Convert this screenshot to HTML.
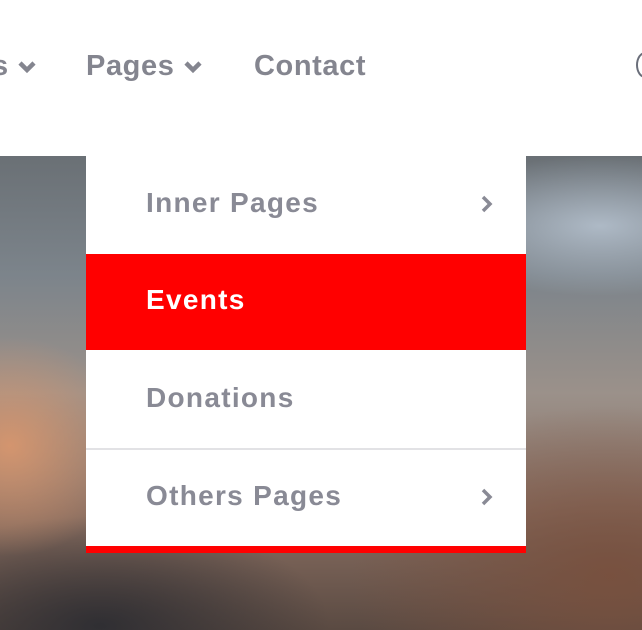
<!DOCTYPE html>
<html><head><style>
html,body{margin:0;padding:0;width:642px;height:630px;overflow:hidden;background:#fff;font-family:"Liberation Sans",sans-serif;}
.bg{position:absolute;left:0;top:156px;width:642px;height:474px;
background:
radial-gradient(ellipse 120px 110px at 10px 290px,rgba(215,150,110,.95),rgba(215,150,110,0) 100%),
radial-gradient(ellipse 230px 110px at 100px 470px,rgba(45,45,50,.95),rgba(45,45,50,0) 100%),
radial-gradient(ellipse 260px 170px at 610px 420px,rgba(120,80,62,.95),rgba(120,80,62,0) 100%),
radial-gradient(ellipse 180px 70px at 600px 70px,rgba(180,192,205,.9),rgba(180,192,205,0) 100%),
linear-gradient(180deg,#6a7075 0%,#7c848b 25%,#9b918a 50%,#8a6f62 75%,#5a4a42 100%);}
.nav{position:absolute;top:50px;font-size:29px;font-weight:bold;color:#84858f;letter-spacing:0.6px;}
.chev{display:inline-block;vertical-align:middle;}
.dd{position:absolute;left:86px;top:156px;width:440px;height:397px;background:#fff;}
.row{position:absolute;left:0;width:440px;font-size:28px;font-weight:bold;color:#898a95;letter-spacing:1.3px;}
.row span{position:absolute;left:60px;}
.arr{position:absolute;left:394px;}
</style></head><body>
<div class="bg"></div>
<div class="nav" style="left:-8px">s <svg class="chev" width="20" height="14" viewBox="0 0 20 14"><path d="M3 3l7 7 7-7" stroke="#84858f" stroke-width="4.5" fill="none"/></svg></div>
<div class="nav" style="left:86px">Pages <svg class="chev" width="20" height="14" viewBox="0 0 20 14"><path d="M3 3l7 7 7-7" stroke="#84858f" stroke-width="4.5" fill="none"/></svg></div>
<div class="nav" style="left:254px">Contact</div>
<div style="position:absolute;left:636px;top:52px;width:14px;height:22px;border:2px solid #6a6e7a;border-radius:50%"></div>
<div class="dd">
<div class="row" style="top:0;height:97px"><span style="top:31px">Inner Pages</span><svg class="arr" style="top:38px" width="14" height="20" viewBox="0 0 14 20"><path d="M3 3l7 7-7 7" stroke="#898a95" stroke-width="3.5" fill="none"/></svg></div>
<div class="row" style="top:98px;height:96px;background:#ff0000;color:#fff"><span style="top:30px">Events</span></div>
<div class="row" style="top:194px;height:98px;border-bottom:2px solid #e2e2e5"><span style="top:32px">Donations</span></div>
<div class="row" style="top:294px;height:96px"><span style="top:30px">Others Pages</span><svg class="arr" style="top:37px" width="14" height="20" viewBox="0 0 14 20"><path d="M3 3l7 7-7 7" stroke="#898a95" stroke-width="3.5" fill="none"/></svg></div>
<div style="position:absolute;left:0;top:390px;width:440px;height:7px;background:#ff0000"></div>
</div>
</body></html>
